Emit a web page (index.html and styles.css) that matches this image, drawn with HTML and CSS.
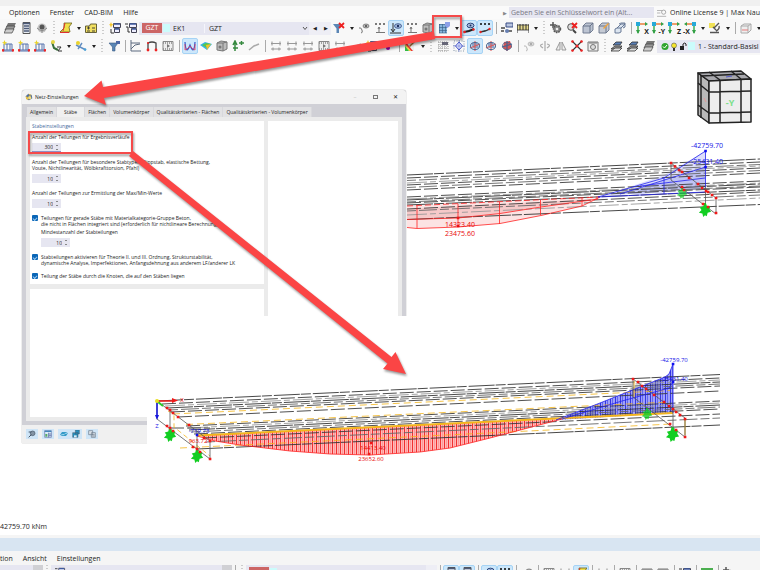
FILE: index.html
```html
<!DOCTYPE html>
<html lang="de">
<head>
    <meta charset="UTF-8">
    <meta name="viewport" content="width=device-width, initial-scale=1.0">
    <title>Netz-Einstellungen</title>
    <link rel="stylesheet" href="styles.css">
</head>
<body>

    <!-- Icon sprite, every symbol is drawn on a 12 x 12 grid -->
    <svg class="sprite" aria-hidden="true">
        <symbol id="stack" viewBox="0 0 12 12"><path d="M4 1h8l-2 4H2z" fill="#777"/><path d="M3 4h8l-2 4H1z" fill="#999" stroke="#444" stroke-width=".7"/><path d="M2 7h8l-2 4H0z" fill="#ccc" stroke="#444" stroke-width=".7"/></symbol>
        <symbol id="server" viewBox="0 0 12 12"><path d="M3 .5h7v11H3z" fill="#e8edf3" stroke="#555"/><path d="M3 1.5h7M4 4h5M4 6.5h5M4 9h5" stroke="#4c5a78" stroke-width="1.3"/></symbol>
        <symbol id="eye" viewBox="0 0 12 12"><circle cx="6" cy="6" r="4.5" fill="#c5c5c5"/><circle cx="6" cy="5" r="2.5" fill="#555"/><path d="M1 6q5 5 10 0M6 8v3" stroke="#888" fill="none"/></symbol>
        <symbol id="section" viewBox="0 0 12 12"><path d="M4 1h8L9 5l1 5H0l4-4z" fill="#f0df48" stroke="#6b6420" stroke-width=".8"/><path d="M0 10.500h9M5 1 3 9" stroke="#e03030"/></symbol>
        <symbol id="notes" viewBox="0 0 12 12"><path d="M.5 4h4l1-2h6v8.500H.5z" fill="#f1df60" stroke="#57522c" stroke-width=".9"/><path d="M2 6h3M3.500 4.500v3M2 9h3M7 6h3M7 9h3" stroke="#333" stroke-width=".9"/></symbol>
        <symbol id="window-new" viewBox="0 0 12 12"><path d="M4.500 1.500h7v4h-7z" fill="#eef" stroke="#445"/><path d="M5.500 6.500h5v4h-5z" fill="#eef" stroke="#445"/><path d="M5 2h6M6 7h4" stroke="#3f5ba0" stroke-width="1.300"/><path d="m2 0 .8 2 2 .8-2 .8L2 6l-.8-2.400L0 2.800 1.200 2z" fill="#f4c62c"/><path d="M2 7v4h3" stroke="#333" fill="none"/></symbol>
        <symbol id="windows" viewBox="0 0 12 12"><path d="M4.500 1.500h7v4h-7zM6.500 6.500h5v4h-5z" fill="#eef" stroke="#445"/><path d="M5 2h6M7 7h4" stroke="#3f5ba0" stroke-width="1.4"/><path d="M0 2h3M1 5h2v5h2" stroke="#333" fill="none"/></symbol>
        <symbol id="filter" viewBox="0 0 12 12"><path d="M1 3h9L7 7v4H4.500V7z" fill="#5b86b5" stroke="#395b85" stroke-width=".6"/><path d="M8 1h4v3H8z" fill="#4d68a5"/></symbol>
        <symbol id="filter-off" viewBox="0 0 12 12"><path d="M0 2h9L6 6.500V11H3.500V6.500z" fill="#5b86b5"/><path d="m6 1 5 5m0-5L6 6" stroke="#ee2020" stroke-width="1.800"/></symbol>
        <symbol id="curve-eye" viewBox="0 0 12 12"><path d="M1 6q2-1 3 2t-1 3" stroke="#777" fill="none"/><ellipse cx="8" cy="4" rx="3" ry="2" fill="#bbb" stroke="#666" stroke-width=".7"/><circle cx="8" cy="4" r="1" fill="#444"/></symbol>
        <symbol id="values" viewBox="0 0 12 12"><path d="m1 1 2 2m0-2L1 3m4-2 2 2m0-2L5 3m4-2 2 2m0-2L9 3" stroke="#444" stroke-width=".7"/><path d="M5 5v6M2 10.500h9M4 7l1-2 1 2" stroke="#777" fill="none"/></symbol>
        <symbol id="arrow-eye" viewBox="0 0 12 12"><path d="M3 1v8M1 7l2 3 2-3M0 11h11" stroke="#333" fill="none"/><ellipse cx="8" cy="4" rx="3.500" ry="2.300" fill="#a8bde0" stroke="#2c477d" stroke-width=".8"/><circle cx="8" cy="4" r="1.200" fill="#1d315f"/></symbol>
        <symbol id="value-line" viewBox="0 0 12 12"><path d="m1 1 2 2m0-2L1 3m4-2 2 2m0-2L5 3m4-2 2 2m0-2L9 3" stroke="#111" stroke-width=".8"/><path d="m1 10 5-1 5-2" stroke="#333" stroke-width="1.300"/><circle cx="1.500" cy="10" r="1.200" fill="#e22"/><circle cx="10.500" cy="7" r="1.200" fill="#e22"/></symbol>
        <symbol id="member-eye" viewBox="0 0 12 12"><path d="m1 10 5-1 5-2" stroke="#222" stroke-width="2"/><circle cx="1.500" cy="10" r="1.300" fill="#e22"/><circle cx="10.500" cy="7.500" r="1.200" fill="#e22"/><ellipse cx="7.500" cy="3.500" rx="3.500" ry="2.300" fill="#a8bde0" stroke="#2c477d"/><circle cx="7.500" cy="3.500" r="1" fill="#1d315f"/></symbol>
        <symbol id="mesh" viewBox="0 0 12 12"><path d="M1 2h8v9H1z" fill="#86b5dc"/><path d="M1 2.500h8M1 5.500h8M1 8.500h8M1 11h8M1.500 2v9M4.500 2v9M7.500 2v9" stroke="#365c83" stroke-width=".6"/><path d="M7 0h5v4L9.500 6 7 4z" fill="#8ea1e8"/></symbol>
        <symbol id="cube" viewBox="0 0 12 12"><path d="m1 4 3-3h7v7l-3 3H1z" fill="#bcc4d2" stroke="#69748a" stroke-width=".9"/><path d="M1 4h7v7M8 4l3-3" stroke="#69748a" fill="none"/></symbol>
        <symbol id="cube-edit" viewBox="0 0 12 12"><path d="m1 4 3-3h7v7l-3 3H1z" fill="#c5cad4" stroke="#69748a" stroke-width=".9"/><path d="M1 4h7v7" stroke="#69748a" fill="none"/><path d="m5 6 5-5 1 1-5 5z" fill="#f0a33c"/></symbol>
        <symbol id="cubes" viewBox="0 0 12 12"><path d="m5 2 2-1h4v4L9 6M1 7l2-1h4v4l-2 1H1zM3 6l4-4h4L7 6" fill="#dce5f0" stroke="#5b6d8c" stroke-width=".9"/></symbol>
        <symbol id="layers-red" viewBox="0 0 12 12"><path d="M5 1h7v4H5z" fill="#b8c4df" stroke="#384c84"/><path d="M7 9h4M0 9h3M0 6h4" stroke="#444" stroke-width="1.500"/><circle cx="6" cy="9" r="2" fill="#6780b3"/></symbol>
        <symbol id="ruler" viewBox="0 0 12 12"><path d="M0 3h12v5H0z" fill="#e5d98c" stroke="#333" stroke-width=".8"/><path d="M0 2v9M3 2v6M6 2v6M9 2v6M12 2v9" stroke="#333"/></symbol>
        <symbol id="gears" viewBox="0 0 12 12"><circle cx="7" cy="7" r="3.500" fill="#888" stroke="#555" stroke-width="1.500" stroke-dasharray="1.500 1"/><circle cx="7" cy="7" r="1.300" fill="#eee"/><path d="M0 3h6M3 0v6" stroke="#555" stroke-width="1.500"/></symbol>
        <symbol id="zoom-off" viewBox="0 0 12 12"><circle cx="5" cy="5" r="3.300" fill="#ddd" stroke="#555"/><path d="m7 8 3 3" stroke="#444" stroke-width="2"/><path d="m6 1 5 5m0-5L6 6" stroke="#ee2020" stroke-width="1.800"/></symbol>
        <symbol id="axis" viewBox="0 0 12 12"><path d="M2 2h8" stroke="#e66a1d" stroke-width="1.300"/><path d="M2 2v9" stroke="#22a13c" stroke-width="1.300"/><path d="M0 0h4v4H0z" fill="#27a9d8"/><path d="m0 8 2 4 2-4zM9 0l3 2-3 2z" fill="#33a044"/></symbol>
        <symbol id="microscope" viewBox="0 0 12 12"><path d="M0 1h6v5H0z" fill="#f0e258"/><path d="m10 1-5 5M4 5l3 3M1 10.500h9M10 4q1 3-3 5" stroke="#555" stroke-width="1.400" fill="none"/></symbol>
        <symbol id="clip" viewBox="0 0 12 12"><path d="m1 4 3-2h7v6l-3 3H1zM1 4h7v7M8 4l3-2" fill="#eee" stroke="#aaa"/><path d="M2 8h6" stroke="#e67b7b"/></symbol>
        <symbol id="load-new" viewBox="0 0 12 12"><path d="M2 4h8v6H2zM5 4v6M8 4v6M1 11h10" stroke="#5673ad" fill="none"/><path d="m1 9 1 2H0zm10 0 1 2h-2z" stroke="#e22" fill="#e22"/><path d="m2.500 0 .8 2 2 .7-2 .8-.8 2-.8-2-1.700-.8 1.700-.7z" fill="#e9d32c"/></symbol>
        <symbol id="support-new" viewBox="0 0 12 12"><path d="m2 2 2 6 4 2" stroke="#386f3b" stroke-width="2" fill="none"/><path d="M7 7h4l-3 4h4" stroke="#333" fill="none"/><circle cx="3" cy="2" r="2" fill="#e5d544"/></symbol>
        <symbol id="dims-new" viewBox="0 0 12 12"><path d="m1 5 10 5M3 9l4-6" stroke="#628dc1" stroke-width="1.400"/><circle cx="3" cy="3" r="2" fill="#e9d32c"/><circle cx="10" cy="9.500" r="1.300" fill="#48a1d8"/></symbol>
        <symbol id="graph" viewBox="0 0 12 12"><path d="M1 0v11h10M1 9l4-4 5-1M1 3h9" stroke="#5d6b80" fill="none"/></symbol>
        <symbol id="frame" viewBox="0 0 12 12"><path d="M2 10V3q4-2 8 0v7" stroke="#444" stroke-width="1.300" fill="none"/><circle cx="2" cy="10" r="1.400" fill="#e22"/><circle cx="10" cy="10" r="1.400" fill="#e22"/><circle cx="2" cy="3" r="1" fill="#e22"/></symbol>
        <symbol id="film" viewBox="0 0 12 12"><path d="M1 1.500h10v9H1z" fill="#eee" stroke="#888"/><path d="M1 3h10M1 9h10" stroke="#888" stroke-width="1.500" stroke-dasharray="1 1"/><path d="m5 4 3 2-3 2z" fill="#777"/></symbol>
        <symbol id="moments" viewBox="0 0 12 12"><path d="M1 2q1 14 5 3 4 11 5-3" stroke="#3458cc" fill="none" stroke-width="1.200"/><path d="M1 4v6l2-1 3-3 3 3 2 1V4" stroke="#e63a5a" fill="none" stroke-width=".8"/></symbol>
        <symbol id="surface" viewBox="0 0 12 12"><path d="m0 5 5-3 7 2-5 6z" fill="#35b5e8"/><path d="m2 5 4-2 5 1-4 4z" fill="#58c64c"/><path d="m6 5 5-1-4 6z" fill="#f2c02d"/></symbol>
        <symbol id="solid" viewBox="0 0 12 12"><path d="m1 3 4-2 6 1v7l-4 2-6-1z" fill="#bbb" stroke="#777"/><path d="M1 3h6v8M7 3l4-1" stroke="#777" fill="none"/><circle cx="4" cy="7" r="1.500" fill="#777"/></symbol>
        <symbol id="reaction" viewBox="0 0 12 12"><path d="M3 11V3M1 5l2-4 2 4M7 3h5M9.500 1v4M1 8h5" stroke="#35893f" stroke-width="1.500" fill="none"/></symbol>
        <symbol id="member" viewBox="0 0 12 12"><path d="m1 10 5-4 5-2" stroke="#aaa" stroke-width="1.600" fill="none"/></symbol>
        <symbol id="member-grey" viewBox="0 0 12 12"><path d="M1 3.500h10M1 9h10M2 1.500v4M10 1.500v4M3 7.500v3M9 7.500v3" stroke="#999" stroke-width="1.100"/></symbol>
        <symbol id="rainbow" viewBox="0 0 12 12"><path d="M1 1h9v10H1z" fill="#eee"/><path d="m1 1 8 10H7L1 4z" fill="#e33"/><path d="m1 4 6 7H5L1 6z" fill="#ec3"/><path d="m1 6 4 5H1z" fill="#3b4"/><path d="m5 6 5-5 1 1-5 5z" fill="#a96a29"/></symbol>
        <symbol id="grid" viewBox="0 0 12 12"><path d="M2 2v9M5 2v9M8 2v9M11 2v9M1 2h10M1 5h10M1 8h10M1 11h10" stroke="#999" stroke-dasharray="1 1"/><path d="M5 2h6v3H5z" fill="#667"/></symbol>
        <symbol id="snap" viewBox="0 0 12 12"><path d="M1 1h10v10H1z" fill="none" stroke="#89a" stroke-dasharray="1 1.500"/><path d="m6 2 3.500 4L6 10 2.500 6z" fill="#e9edff" stroke="#4a5ac8"/><path d="M6 0v12M0 6h12" stroke="#4a5ac8" stroke-width=".5"/></symbol>
        <symbol id="plane" viewBox="0 0 12 12"><path d="M2 3h6l2 5H4z" fill="#8ba5ca"/><path d="M6 1v10M1 8l10-4" stroke="#da5d5d" stroke-width="1.100"/><ellipse cx="6" cy="6" rx="4.500" ry="3.500" fill="none" stroke="#47648f"/></symbol>
        <symbol id="plane-red" viewBox="0 0 12 12"><path d="m3 2 6-1 2 6-5 4-4-3z" fill="#d95555"/><path d="M1 7 11 4M6 1v10" stroke="#47648f" stroke-width="1.200"/><ellipse cx="6" cy="6" rx="4.500" ry="3.500" fill="none" stroke="#47648f" stroke-width=".8"/></symbol>
        <symbol id="rotate" viewBox="0 0 12 12"><path d="M6 1v10M4 4q-5 1 0 4M8 4q5 1 0 4" stroke="#aaa" stroke-width="1.200" fill="none"/></symbol>
        <symbol id="mirror" viewBox="0 0 12 12"><path d="M5 2v8H1zM7 2v8h4z" stroke="#999" fill="#eee"/></symbol>
        <symbol id="intersect" viewBox="0 0 12 12"><path d="m1 1 10 10M11 1 1 11" stroke="#333" stroke-width="1.100"/><circle cx="1.500" cy="1.500" r="1.300" fill="#e22"/><circle cx="10.500" cy="1.500" r="1.300" fill="#e22"/><circle cx="6" cy="6" r="1.500" fill="#e22"/><circle cx="1.500" cy="10.500" r="1.300" fill="#e22"/><circle cx="10.500" cy="10.500" r="1.300" fill="#e22"/></symbol>
        <symbol id="camera" viewBox="0 0 12 12"><path d="M1 2h10v9H1z" fill="#eee" stroke="#777"/><circle cx="6" cy="7" r="2.500" fill="#ddd" stroke="#777"/><path d="M2 3h8" stroke="#777"/></symbol>
        <symbol id="sheets" viewBox="0 0 12 12"><path d="m0 9 4-3h7L8 9z" fill="#999" stroke="#333" stroke-width=".8"/><path d="m0 11 4-3h7l-3 3z" fill="#ddd" stroke="#333" stroke-width=".8"/><path d="m2 5 3-3h6L9 5z" fill="#5a7fb5" stroke="#333" stroke-width=".8"/></symbol>
        <symbol id="search-list" viewBox="0 0 12 12"><path d="M0 3h6M0 6h4M0 10h11" stroke="#aaa"/><circle cx="8" cy="5" r="2.500" fill="none" stroke="#999"/></symbol>
        <symbol id="app" viewBox="0 0 12 12"><path d="m1 5 4-4 5 2 1 5-5 3-4-2z" fill="#536f9c"/><path d="m1 5 3 1 1 5-3-2zM5 1l2 3 3-1z" fill="#f3c63c"/><circle cx="7" cy="7" r="2.500" fill="#f4dc73"/></symbol>
        <symbol id="zoom" viewBox="0 0 12 12"><circle cx="7" cy="5" r="3.500" fill="#8394a5" stroke="#456"/><path d="m5 7-4 4M1 3h4" stroke="#456" stroke-width="1.500"/></symbol>
        <symbol id="table" viewBox="0 0 12 12"><path d="M1 1h10v10H1z" fill="#dcecf7" stroke="#67a"/><path d="M1 2h10" stroke="#48b" stroke-width="2"/><path d="M2 6h3v4H2z" fill="#5a6"/><path d="M7 4v7M7 6h4M7 8.500h4" stroke="#459"/></symbol>
        <symbol id="link" viewBox="0 0 12 12"><path d="m0 7 3-4h6l3 2-3 4H3z" fill="#359bc8"/><path d="M2 7h4l2-2h3" stroke="#d5effa" fill="none"/></symbol>
        <symbol id="disk" viewBox="0 0 12 12"><path d="M1 4h8v7H1zM5 0h6v6H5z" fill="#288fbd" stroke="#456" stroke-width=".7"/><path d="M3 8h4v3H3z" fill="#dcecf7"/></symbol>
        <symbol id="copy" viewBox="0 0 12 12"><path d="M1 1h6v6H1zM5 4h6v7H5z" fill="#dde3ea" stroke="#678"/><path d="M6 7h4M6 9h4" stroke="#678"/></symbol>
        <!-- Green nodal support of the bridge model -->
        <symbol id="support" viewBox="0 0 14 16"><path d="M6 0h2l1 3 4 1-1 3 2 3-4 1-1 4-2-1-2 2-1-4-4-1 3-3-2-3 4-1z" fill="#12ce22"/></symbol>
    </svg>

    <div class="app">
        <header>
            <nav class="menubar">
                <button>Optionen</button>
                <button>Fenster</button>
                <button>CAD-BIM</button>
                <button>Hilfe</button>
                <div class="menubar-end">
                    <span class="pointer">▶</span>
                    <input class="search" type="text" aria-label="Schlüsselwort" placeholder="Geben Sie ein Schlüsselwort ein (Alt...">
                    <svg class="icon"><use href="#search-list"/></svg>
                    <span class="license">Online License 9 | Max Nau</span>
                </div>
            </nav>

            <div class="toolbar toolbar-main">
                <button class="tool"><svg><use href="#stack"/></svg></button>
                <button class="tool"><svg><use href="#server"/></svg></button>
                <button class="tool"><svg><use href="#eye"/></svg></button>
                <i class="handle"></i>
                <button class="tool"><svg><use href="#section"/></svg></button>
                <button class="caret"></button>
                <button class="tool"><svg><use href="#notes"/></svg></button>
                <i class="handle"></i>
                <button class="tool"><svg><use href="#window-new"/></svg></button>
                <button class="tool"><svg><use href="#windows"/></svg></button>
                <div class="combo">
                    <span class="tag">GZT</span>
                    <span class="swatch"></span>
                    <span class="case">EK1</span>
                    <select aria-label="Lastfall"><option>GZT</option></select>
                    <svg class="chevron" viewBox="0 0 8 8"><path d="m2 3 2 2.500L6 3" fill="none" stroke="#555"/></svg>
                </div>
                <button class="step">◀</button>
                <button class="step">▶</button>
                <button class="tool"><svg><use href="#filter-off"/></svg></button>
                <button class="caret"></button>
                <button class="tool"><svg><use href="#curve-eye"/></svg></button>
                <button class="tool"><svg><use href="#values"/></svg></button>
                <button class="tool active"><svg><use href="#arrow-eye"/></svg></button>
                <button class="tool"><svg><use href="#values"/></svg></button>
                <button class="tool"><svg><use href="#solid"/></svg></button>
                <button class="tool"><svg><use href="#mesh"/></svg></button>
                <button class="caret"></button>
                <button class="tool active"><svg><use href="#member-eye"/></svg></button>
                <button class="tool active"><svg><use href="#value-line"/></svg></button>
                <i class="separator"></i>
                <button class="tool"><svg><use href="#layers-red"/></svg></button>
                <button class="tool"><svg><use href="#ruler"/></svg></button>
                <button class="caret"></button>
                <i class="handle"></i>
                <button class="tool"><svg><use href="#gears"/></svg></button>
                <button class="tool"><svg><use href="#zoom-off"/></svg></button>
                <button class="tool"><svg><use href="#cube"/></svg></button>
                <button class="tool"><svg><use href="#cube-edit"/></svg></button>
                <button class="tool"><svg><use href="#cubes"/></svg></button>
                <i class="separator"></i>
                <button class="tool axis"><svg><use href="#axis"/></svg><b>X</b></button>
                <button class="tool axis"><svg><use href="#axis"/></svg><b>-Y</b></button>
                <button class="tool axis"><svg><use href="#axis"/></svg><b>Z</b></button>
                <button class="tool axis flipped"><svg><use href="#axis"/></svg><b>-X</b></button>
                <button class="caret"></button>
                <button class="tool"><svg><use href="#microscope"/></svg></button>
                <button class="caret"></button>
                <i class="separator"></i>
                <button class="tool"><svg><use href="#clip"/></svg></button>
                <button class="caret"></button>
            </div>

            <div class="toolbar">
                <button class="tool"><svg><use href="#load-new"/></svg></button>
                <button class="tool"><svg><use href="#load-new"/></svg></button>
                <button class="tool"><svg><use href="#load-new"/></svg></button>
                <button class="tool"><svg><use href="#support-new"/></svg></button>
                <button class="caret"></button>
                <button class="tool"><svg><use href="#dims-new"/></svg></button>
                <button class="caret"></button>
                <i class="handle"></i>
                <button class="tool"><svg><use href="#filter"/></svg></button>
                <i class="separator"></i>
                <button class="tool"><svg><use href="#graph"/></svg></button>
                <button class="tool"><svg><use href="#frame"/></svg></button>
                <button class="tool"><svg><use href="#film"/></svg></button>
                <i class="separator"></i>
                <button class="tool active"><svg><use href="#moments"/></svg></button>
                <button class="tool"><svg><use href="#surface"/></svg></button>
                <button class="tool"><svg><use href="#solid"/></svg></button>
                <button class="tool"><svg><use href="#reaction"/></svg></button>
                <button class="tool"><svg><use href="#member"/></svg></button>
                <i class="separator"></i>
                <button class="tool"><svg><use href="#member-grey"/></svg></button>
                <button class="tool"><svg><use href="#member-grey"/></svg></button>
                <button class="tool"><svg><use href="#member-grey"/></svg></button>
                <button class="tool"><svg><use href="#film"/></svg></button>
                <button class="tool"><svg><use href="#member-grey"/></svg></button>
                <button class="tool"><svg><use href="#member"/></svg></button>
                <button class="tool"><svg><use href="#window-new"/></svg></button>
                <button class="tool"><svg viewBox="0 0 12 12"><circle cx="6" cy="8" r="2" fill="#a0b"/></svg></button>
                <i class="separator"></i>
                <button class="tool"><svg><use href="#rainbow"/></svg></button>
                <button class="caret"></button>
                <i class="handle"></i>
                <button class="tool"><svg><use href="#grid"/></svg></button>
                <button class="tool"><svg><use href="#snap"/></svg></button>
                <button class="tool active"><svg><use href="#plane"/></svg></button>
                <button class="tool"><svg><use href="#plane"/></svg></button>
                <button class="tool"><svg><use href="#plane-red"/></svg></button>
                <i class="separator"></i>
                <button class="tool"><svg><use href="#curve-eye" opacity=".5"/></svg></button>
                <button class="tool"><svg><use href="#rotate"/></svg></button>
                <button class="tool"><svg><use href="#mirror"/></svg></button>
                <button class="tool"><svg><use href="#intersect"/></svg></button>
                <button class="tool"><svg><use href="#camera"/></svg></button>
                <i class="handle"></i>
                <button class="tool"><svg><use href="#sheets"/></svg></button>
                <button class="tool"><svg><use href="#sheets"/></svg></button>
                <button class="tool"><svg><use href="#stack"/></svg></button>
                <div class="combo combo-layer">
                    <svg class="layer-state" viewBox="0 0 26 9">
                        <circle cx="4" cy="4.500" r="3.500" fill="#2fa52f"/><path d="m2 4.500 1.500 1.500L6 3" stroke="#fff" fill="none"/>
                        <circle cx="13" cy="3.500" r="2.500" fill="#f4e52c" stroke="#555" stroke-width=".6"/><path d="M12 6h2v3h-2z" fill="#333"/>
                        <path d="M19 4h4v4h-4z" fill="#222"/><path d="M22 4V2q2-2 3 0v2" stroke="#222" fill="none"/>
                    </svg>
                    <span class="swatch"></span>
                    <select aria-label="Sichtbarkeit"><option>1 - Standard-Basisl</option></select>
                </div>
            </div>
        </header>

        <main class="workspace">
            <!-- Bridge model with few member divisions -->
            <svg class="model">
                <g transform="translate(0 -55)">
                    <path d="M407 206 600 198 582 206 541 215.500 500 223.500 458 227 417 228.500 407 227.500z" fill="#fbd9d9" opacity=".75"/>
                    <path d="M407 209 598 199 541 207 500 213.500 458 218 407 219z" fill="#f3bcbc" opacity=".65"/>
                    <path d="M600 197 664 175 705.500 151v36L620 195z" fill="#cfd1fb" opacity=".7"/>
                    <path d="M620 194 705.500 167v22L640 194z" fill="#aeb1ee" opacity=".6"/>
                    <g class="edge">
                        <path d="m407 175 353-16"/>
                        <path d="m407 178 353-16" class="d1"/>
                        <path d="m407 180.500 353-16" class="d2"/>
                        <path d="m407 183 353-17" class="d3"/>
                        <path d="m407 185 353-17" class="d1"/>
                        <path d="m407 187.500 353-17" class="d2"/>
                        <path d="m407 190 353-17" class="d1"/>
                        <path d="m407 197 353-16" class="d1"/>
                        <path d="m407 199 353-16" class="d3"/>
                        <path d="m407 200 353-16"/>
                        <path d="m407 202 353-16" class="d2"/>
                        <path d="m407 203 353-16" class="d1"/>
                        <path d="m407 205 353-15"/>
                        <path d="m407 209 353-17" class="d1"/>
                        <path d="m407 211 353-16" class="d2"/>
                        <path d="m407 215 353-17" class="d3"/>
                        <path d="m407 219.500 353-15"/>
                    </g>
                    <g class="red">
                        <path d="m407 206 193-9" stroke-dasharray="6 3"/>
                        <path d="M407 227.500 417 228.500 458 227 500 223.500 541 215.500 582 206 600 197M407 219.500l51-1.500 42-4.500 41-6.500 57-8"/>
                        <path d="M417 206v22M458 204v23M499.500 202v22M540.500 200v15M582 198v8"/>
                    </g>
                    <g class="blue">
                        <path d="m598 197 66-19 41.500-27V187M620 194l85.500-27M598 197l107-5M664 177v17M640 186l65-8"/>
                    </g>
                    <g class="frame">
                        <path d="M671 163v17l45 34v-16zM705.500 187v19"/>
                    </g>
                    <use href="#support" x="676" y="187" width="12" height="12" opacity=".7"/>
                    <use href="#support" x="698" y="203" width="14" height="14"/>
                    <path class="nodes" d="m671 163h.1M675 166.500h.1M679 170h.1M682 172h.1M689 178h.1M698 184h.1M702 188h.1M706 191h.1M708 192h.1M712 195h.1M716 198h.1M716 213h.1M703 204h.1M708 207h.1M682 187h.1M684 190h.1M458 218h.1M458 226h.1"/>
                    <path class="nodes blue-nodes" d="M705.500 151h.1M705.500 167h.1"/>
                    <text class="value red-text" x="460" y="227">14323.40</text>
                    <text class="value red-text" x="460" y="236">23475.60</text>
                    <text class="value blue-text" x="707" y="148">-42759.70</text>
                    <text class="value blue-text" x="707" y="164">-25431.40</text>

                    <!-- Navigation cube -->
                    <g stroke="#222" stroke-width="1.500" stroke-linejoin="round">
                        <path d="m698 73 11 8v42l-11-8z" fill="#b9b9b9"/>
                        <path d="m698 73 43-2 10 8-42 2z" fill="#a9a9ae"/>
                        <path d="m709 81 42-2v43l-42 1z" fill="#ededed"/>
                        <path d="M720 81v42M741 80v42M709 92l42-1M709 113l42-1M701 75v43M698 83l11 9M698 105l11 8M709 72l11 8M731 71l10 8M701 76l43-2" fill="none"/>
                    </g>
                    <path d="m704 98 2 4" stroke="#e39a9a"/>
                    <path d="m726 77 6-1" stroke="#5358c7"/>
                    <text class="cube-face" x="730" y="106">-Y</text>
                </g>
            </svg>

            <section class="dialog" aria-label="Netz-Einstellungen">
                <div class="titlebar">
                    <svg class="app-icon"><use href="#app"/></svg>
                    <span class="title">Netz-Einstellungen</span>
                    <button class="window-button dim" aria-label="Minimieren">–</button>
                    <button class="window-button" aria-label="Maximieren"><i></i></button>
                    <button class="window-button" aria-label="Schließen">✕</button>
                </div>
                <div class="tabs">
                    <button>Allgemein</button>
                    <button class="selected">Stäbe</button>
                    <button>Flächen</button>
                    <button>Volumenkörper</button>
                    <button>Qualitätskriterien - Flächen</button>
                    <button>Qualitätskriterien - Volumenkörper</button>
                </div>
                <div class="tab-page">
                    <div class="column">
                        <form class="panel settings">
                            <h2>Stabeinstellungen</h2>
                            <div class="field">
                                <label for="divisions">Anzahl der Teilungen für Ergebnisverläufe</label>
                                <span class="spin focused"><input id="divisions" type="text" value="300"><i></i></span>
                            </div>
                            <div class="field">
                                <label for="special">Anzahl der Teilungen für besondere Stabtypen (Rippstab, elastische Bettung,<br>Voute, Nichtlinearität, Wölbkrafttorsion, Pfahl)</label>
                                <span class="spin"><input id="special" type="text" value="10"><i></i></span>
                            </div>
                            <div class="field">
                                <label for="minmax">Anzahl der Teilungen zur Ermittlung der Max/Min-Werte</label>
                                <span class="spin"><input id="minmax" type="text" value="10"><i></i></span>
                            </div>
                            <div class="option">
                                <input id="concrete" type="checkbox" checked>
                                <div>
                                    <label for="concrete">Teilungen für gerade Stäbe mit Materialkategorie-Gruppe Beton,<br>die nicht in Flächen integriert sind (erforderlich für nichtlineare Berechnung)</label>
                                    <div class="field nested">
                                        <label for="minimum">Mindestanzahl der Stabteilungen</label>
                                        <span class="spin"><input id="minimum" type="text" value="10"><i></i></span>
                                    </div>
                                </div>
                            </div>
                            <div class="option">
                                <input id="theory" type="checkbox" checked>
                                <label for="theory">Stabteilungen aktivieren für Theorie II. und III. Ordnung, Strukturstabilität,<br>dynamische Analyse, Imperfektionen, Anfangsdehnung aus anderem LF/anderer LK</label>
                            </div>
                            <div class="option">
                                <input id="nodes" type="checkbox" checked>
                                <label for="nodes">Teilung der Stäbe durch die Knoten, die auf den Stäben liegen</label>
                            </div>
                        </form>
                        <div class="panel fill"></div>
                    </div>
                    <div class="panel preview"></div>
                </div>
                <div class="dialog-footer">
                    <button aria-label="Suchen"><svg><use href="#zoom"/></svg></button>
                    <button aria-label="Einheiten"><svg><use href="#table"/></svg></button>
                    <span class="pair">
                        <button aria-label="Laden"><svg><use href="#link"/></svg></button>
                        <button aria-label="Speichern"><svg><use href="#disk"/></svg></button>
                    </span>
                    <button aria-label="Kopieren"><svg><use href="#copy"/></svg></button>
                </div>
            </section>

            <!-- Bridge model with fine member divisions, lies over the dialog -->
            <svg class="model-fine">
                <defs>
                    <pattern id="hatch-red" width="4" height="8" patternUnits="userSpaceOnUse">
                        <path d="M0 0h4v8H0z" fill="#ffb9b9"/><path d="M.5 0v8" stroke="#f03030"/><path d="M2.500 0v8" stroke="#ff8a8a" stroke-width=".7"/>
                    </pattern>
                    <pattern id="hatch-blue" width="5" height="8" patternUnits="userSpaceOnUse">
                        <path d="M0 0h5v8H0z" fill="#9fa1fa"/><path d="M.5 0v8" stroke="#3535e0"/><path d="M2.500 0v8" stroke="#5558f0" stroke-width=".8"/>
                    </pattern>
                </defs>
                <g transform="translate(-147 -316)">
                    <path d="M197 435 215 441 240 445 290 451 330 454 370 455 420 452 450 448 490 438 562 419z" fill="url(#hatch-red)"/>
                    <path d="M556 420 600 403 640 387 665 377 669 374 673 364V413z" fill="url(#hatch-blue)"/>
                    <g class="edge">
                        <path d="m157 401 563-26.500"/>
                        <path d="m162 404 558-26" class="d1"/>
                        <path d="m165 406 555-26" class="d3"/>
                        <path d="m167 408 553-26"/>
                        <path d="m169 410 551-26" class="d2"/>
                        <path d="m171 412 549-26" class="d1"/>
                        <path d="m178 417 542-26" class="d1"/>
                        <path d="m186 426 534-25" class="d1"/>
                        <path d="m188 428 532-25" class="d3"/>
                        <path d="m189 430 531-25"/>
                        <path d="m191 432 529-25" class="d2"/>
                        <path d="m194 434 526-25" class="d1"/>
                        <path d="m203 438 517-24" class="d1"/>
                        <path d="m206 442 514-24" class="d2"/>
                        <path d="m197 449 523-24"/>
                        <path d="m170 428h40" class="d1"/>
                    </g>
                    <g class="amber">
                        <path d="m173 414 497-23.500M186 424.500l484-22.500M180 448l492-24" stroke-width=".8" stroke-dasharray="7 4"/>
                        <path d="m168 411 6 3v13l36 29" stroke-width=".8" stroke-dasharray="5 3"/>
                        <path d="M197 435.500 673 413" stroke-width="2"/>
                        <path d="M634 381v16M685 420v15"/>
                    </g>
                    <path class="red" d="M197 436 215 441 240 445 290 451 330 454 370 455 420 452 450 448 490 438 562 419"/>
                    <path class="blue" d="M556 420 600 403 640 387 665 377 669 374 673 364V413M562 419l60-18 40-11 7-2 4-6"/>
                    <g class="frame">
                        <path d="M157 401v18l53 40v-18zM170 409v19M197 431v18M633 379v18l52 40v-19zM673 409v19"/>
                    </g>
                    <use href="#support" x="163" y="428" width="14" height="14"/>
                    <use href="#support" x="190" y="449" width="14" height="14"/>
                    <use href="#support" x="641" y="408" width="12" height="12" opacity=".8"/>
                    <use href="#support" x="665" y="427" width="15" height="15"/>
                    <path class="nodes" d="M167 408h.1M170 410h.1M173 413h.1M178 417h.1M189 425h.1M204 438h.1M210 441h.1M210 459h.1M167 426h.1M170 428h.1M173 431h.1M193 447h.1M197 449h.1M200 452h.1M633 379h.1M638 382h.1M642 386h.1M646 389h.1M654 395h.1M664 402h.1M669 406h.1M673 409h.1M676 412h.1M680 415h.1M685 419h.1M685 437h.1M670 424h.1M676 430h.1M371 443h.1M369 454h.1"/>
                    <path class="nodes blue-nodes" d="M673 364h.1M673 382h.1M197 435h.1"/>
                    <path d="M157 401h17" stroke="#f01818" stroke-width="1.500"/><path d="m172 398 6 2.500-6 2.500z" fill="#f01818"/>
                    <path d="M157 401v14" stroke="#1515e0" stroke-width="1.500"/><path d="m155 415 2 5 2-5z" fill="#1515e0"/>
                    <path d="m158 402 5 4" stroke="#28c828" stroke-width="2"/><circle cx="157" cy="401" r="2" fill="#e8e020"/>
                    <text class="value small red-text" x="182" y="402">X</text>
                    <text class="value small blue-text" x="157" y="428">Z</text>
                    <text class="value small blue-text" x="199" y="433">-719.73</text>
                    <text class="value small red-text" x="198" y="443">963.72</text>
                    <text class="value small red-text" x="373" y="450">14413.40</text>
                    <text class="value small red-text" x="371" y="461">23652.60</text>
                    <text class="value small blue-text" x="674" y="362">-42759.70</text>
                    <text class="value small blue-text" x="674" y="381">-25431.40</text>
                </g>
            </svg>

            <p class="status">42759.70 kNm</p>
        </main>

        <footer>
            <div class="splitter"></div>
            <nav class="menubar panel-menu">
                <button>tion</button>
                <button>Ansicht</button>
                <button>Einstellungen</button>
            </nav>
            <div class="toolbar panel-toolbar">
                <div class="combo combo-short"><span class="drop"></span></div>
                <i class="handle"></i>
                <div class="combo combo-wide"><svg class="icon"><use href="#windows"/></svg><span class="drop"></span></div>
                <i class="separator"></i><i class="handle"></i>
                <div class="combo combo-case"><span class="tag"></span><span class="swatch"></span></div>
                <button class="step"></button>
                <i class="separator"></i>
                <button class="tool active"><svg><use href="#server"/></svg></button>
                <button class="tool active"><svg><use href="#server"/></svg></button>
                <i class="separator"></i>
                <button class="tool active"><svg><use href="#member-eye"/></svg></button>
                <button class="tool active"><svg><use href="#value-line"/></svg></button>
                <i class="separator"></i>
                <button class="tool"><svg><use href="#curve-eye"/></svg></button>
                <i class="separator"></i>
                <button class="tool"><svg><use href="#film"/></svg></button>
                <button class="tool"><svg><use href="#member-grey"/></svg></button>
                <button class="tool active"><svg><use href="#section"/></svg></button>
                <i class="separator"></i>
                <button class="tool"><svg><use href="#member-grey"/></svg></button>
                <i class="separator"></i>
                <button class="tool"><svg><use href="#film"/></svg></button>
                <i class="separator"></i>
                <button class="tool"><svg><use href="#camera"/></svg></button>
                <button class="tool"><svg><use href="#camera"/></svg></button>
                <i class="separator"></i>
                <button class="tool"><svg><use href="#windows"/></svg></button>
                <i class="separator"></i>
                <button class="tool"><svg viewBox="0 0 12 12"><path d="M0 1h12v10H0z" fill="#4caf50"/></svg></button>
                <i class="separator"></i>
                <button class="tool"><svg><use href="#gears"/></svg></button>
            </div>
        </footer>

        <!-- Red callouts over the whole window -->
        <svg class="callouts" aria-hidden="true">
            <g fill="#fb4545">
                <path d="M434 31.500 103 87l-1.500-6.500L84 96l22 9-2-7 331-59z"/>
                <path d="m133 151 258.500 206 4-5L406 374l-23-5 4.500-5.500L129 156z"/>
            </g>
            <path d="M433 16h28v21h-28zM29 132h103v21H29z" fill="none" stroke="#f54a4a" stroke-width="2"/>
        </svg>
    </div>

</body>
</html>
```

FILE: styles.css
```css
* {
    box-sizing: border-box;
}

body {
    margin: 0;
    font-family: "Open Sans", "Noto Sans", sans-serif;
    font-size: 7px;
    color: #1c1c1c;
    background: #fff;
    overflow: hidden;
}

button, input, select {
    margin: 0;
    padding: 0;
    border: 0;
    background: none;
    font: inherit;
    color: inherit;
}

.sprite {
    position: absolute;
    width: 0;
    height: 0;
}

.app {
    position: relative;
    display: flex;
    flex-direction: column;
    height: 100vh;
}

/* Menu bar */
header {
    border-top: 6px solid #f0f0f0;
    background: #f8f8f8;
}

.menubar {
    display: flex;
    align-items: center;
    gap: 10px;
    height: 13px;
    padding-left: 9px;
    white-space: nowrap;
    background: #fafafa;
}

.menubar-end {
    display: flex;
    flex: none;
    align-items: center;
    gap: 2px;
    margin-left: auto;
}

.pointer {
    font-size: 5px;
    color: #888;
}

.search {
    flex: none;
    width: 145px;
    height: 11px;
    padding-left: 2px;
    background: #e6e6f1;
}

.search::placeholder {
    color: #777784;
}

.icon {
    flex: none;
    width: 12px;
    height: 10px;
}

/* Toolbars */
.toolbar {
    display: flex;
    align-items: center;
    height: 18px;
    overflow: hidden;
    white-space: nowrap;
}

.toolbar-main {
    padding-left: 2px;
}

.tool {
    display: flex;
    flex: none;
    align-items: center;
    justify-content: center;
    width: 16px;
    height: 16px;
}

.tool svg {
    flex: none;
    width: 12px;
    height: 12px;
}

.tool.active {
    border: 1px solid #a6d3f5;
    border-radius: 2px;
    background: #cce7fb;
}

.axis {
    position: relative;
}

.axis b {
    position: absolute;
    right: 1px;
    bottom: 0;
    font-size: 7px;
    line-height: 8px;
}

.flipped svg {
    transform: scaleX(-1);
}

.flipped b {
    right: auto;
    left: 1px;
}

.caret {
    display: flex;
    flex: none;
    justify-content: center;
    width: 9px;
}

.caret::before {
    content: "";
    border: 2px solid transparent;
    border-top: 3px solid #222;
    border-bottom: 0;
}

.separator {
    flex: none;
    width: 6px;
    height: 12px;
    background: linear-gradient(#aaa, #aaa) center / 1px 100% no-repeat;
}

.handle {
    flex: none;
    width: 8px;
    height: 14px;
    background: repeating-linear-gradient(#ccc 0 1px, transparent 1px 3px) center / 2px 100% no-repeat;
}

.combo {
    display: flex;
    flex: none;
    align-items: center;
    width: 170px;
    height: 13px;
    padding-left: 3px;
    background: #e6e6f1;
}

.tag {
    width: 20px;
    height: 10px;
    line-height: 10px;
    text-align: center;
    color: #fff;
    background: #cc6565;
}

.swatch {
    width: 7px;
    height: 8px;
    margin: 0 3px 0 1px;
    background: #ccfcfc;
}

.case {
    width: 32px;
    border-right: 1px solid #f5f5fa;
}

.combo select {
    flex: 1;
    height: 13px;
    padding-left: 4px;
    appearance: none;
}

.chevron {
    width: 8px;
    height: 8px;
}

.combo-layer {
    flex: 1;
    padding-left: 4px;
}

.layer-state {
    width: 26px;
    height: 9px;
}

.combo-layer select {
    padding-left: 0;
}

.step {
    flex: none;
    width: 11px;
    height: 13px;
    font-size: 5px;
    background: #eeeef5;
}

/* Workspace */
.workspace {
    position: relative;
    flex: 1;
    overflow: hidden;
}

.model {
    position: absolute;
    width: 100%;
    height: 100%;
}

.model-fine {
    position: absolute;
    left: 147px;
    top: 261px;
    width: 573px;
    height: 164px;
    background: #fff;
}

.edge path {
    stroke: #333;
    stroke-width: .9;
    stroke-dasharray: 26 1 10 2;
}

.edge .d1 {
    stroke: #3c3c3c;
    stroke-dasharray: 14 3;
}

.edge .d2 {
    stroke: #666;
    stroke-dasharray: 9 3 18 3;
}

.edge .d3 {
    stroke: #999;
    stroke-dasharray: 20 3 6 3;
}

.red {
    fill: none;
    stroke: #f22;
    stroke-width: .8;
}

.blue {
    fill: none;
    stroke: #22e;
    stroke-width: .8;
}

.amber {
    fill: none;
    stroke: #f3b51d;
}

.frame {
    fill: none;
    stroke: #555;
    stroke-width: .8;
}

.nodes {
    stroke: #f01818;
    stroke-width: 2.500;
    stroke-linecap: square;
}

.blue-nodes {
    stroke: #1010f0;
}

.value {
    font-size: 7px;
    text-anchor: middle;
}

.value.small {
    font-size: 6px;
}

.red-text {
    fill: #e80808;
}

.blue-text {
    fill: #1414e8;
}

.cube-face {
    font-size: 9px;
    font-weight: bold;
    text-anchor: middle;
    fill: #7be08a;
}

.status {
    position: absolute;
    left: 0;
    bottom: 3px;
    margin: 0;
    line-height: 10px;
}

/* Mesh settings dialog */
.dialog {
    position: absolute;
    left: 22px;
    top: 35px;
    display: flex;
    flex-direction: column;
    width: 384px;
    height: 353px;
    border-radius: 3px 3px 0 0;
    background: #d0d0d6;
    box-shadow: 0 0 1px #555;
    font-size: 5px;
    line-height: 6px;
    white-space: nowrap;
}

.titlebar {
    display: flex;
    align-items: center;
    height: 14px;
    padding: 0 1px 0 3px;
    border-radius: 3px 3px 0 0;
    background: #f3f3f3;
}

.app-icon {
    width: 8px;
    height: 8px;
}

.title {
    flex: 1;
    padding-left: 2px;
}

.window-button {
    display: flex;
    align-items: center;
    justify-content: center;
    width: 20px;
    font-size: 6px;
}

.window-button i {
    width: 5px;
    height: 4px;
    border: 1px solid #777;
}

.dim {
    color: #bbb;
}

.tabs {
    display: flex;
    height: 13px;
    padding: 3px 0 0 5px;
}

.tabs button {
    padding: 0 3px;
    border-right: 1px solid #d8d8dc;
    background: #e2e2e4;
}

.tabs .selected {
    padding: 0 7px;
    background: #f0f0f0;
}

.tab-page {
    display: flex;
    flex: 1;
    gap: 4px;
    margin: 0 4px 4px;
    padding: 4px;
    background: #ebebeb;
}

.column {
    display: flex;
    flex: 9;
    flex-direction: column;
    gap: 5px;
    min-width: 0;
}

.panel {
    background: #fff;
}

.fill {
    flex: 1;
}

.preview {
    flex: 5;
}

.settings {
    display: flex;
    flex-direction: column;
    gap: 7px;
    padding: 0 2px 5px;
}

.settings h2 {
    margin: 1px 0 -3px;
    font-size: 5px;
    font-weight: normal;
    line-height: 8px;
    color: #44699b;
}

.field {
    display: flex;
    flex-direction: column;
    align-items: flex-start;
    gap: 3px;
}

.nested {
    margin-top: 2px;
}

.spin {
    display: flex;
    align-items: center;
    width: 29px;
    height: 9px;
    background: #e6e6f1;
}

.focused {
    border-bottom: 1px solid #8f8fc4;
}

.spin input {
    width: 21px;
    text-align: right;
}

.spin i {
    width: 2px;
    height: 5px;
    margin-left: 3px;
    border: solid #888;
    border-width: 1px 0;
}

.option {
    display: flex;
    align-items: flex-start;
    gap: 3px;
}

.option > input {
    flex: none;
    display: flex;
    align-items: center;
    justify-content: center;
    width: 6px;
    height: 6px;
    appearance: none;
    border-radius: 1px;
    background: #0a66b7;
}

.option > input:checked::before {
    content: "";
    width: 3px;
    height: 2px;
    border: solid #9cc8ee;
    border-width: 0 0 1px 1px;
    transform: rotate(-45deg);
}

.dialog-footer {
    display: flex;
    align-items: center;
    gap: 4px;
    height: 18px;
    padding-left: 4px;
    background: #f0f0f0;
}

.dialog-footer button {
    display: flex;
    align-items: center;
    justify-content: center;
    width: 12px;
    height: 10px;
    background: #cfe5f7;
}

.dialog-footer svg {
    width: 8px;
    height: 8px;
}

.pair {
    display: flex;
}

/* Bottom panel */
.splitter {
    height: 16px;
    border-top: 3px solid #f5f5f5;
    background: #d8e5f2;
}

.panel-menu {
    height: 14px;
    padding-left: 0;
    background: #f5f5f5;
}

.panel-toolbar {
    align-items: flex-start;
    height: 5px;
    background: #f5f5f5;
}

.combo-short {
    justify-content: flex-end;
    width: 43px;
}

.combo-wide {
    justify-content: space-between;
    width: 181px;
}

.combo-case {
    width: 180px;
}

.drop {
    width: 10px;
    height: 13px;
    background: #d0d0d4;
}

.callouts {
    position: absolute;
    width: 100%;
    height: 100%;
    pointer-events: none;
    filter: drop-shadow(1px 2px 1px rgba(0, 0, 0, .4));
}
```
